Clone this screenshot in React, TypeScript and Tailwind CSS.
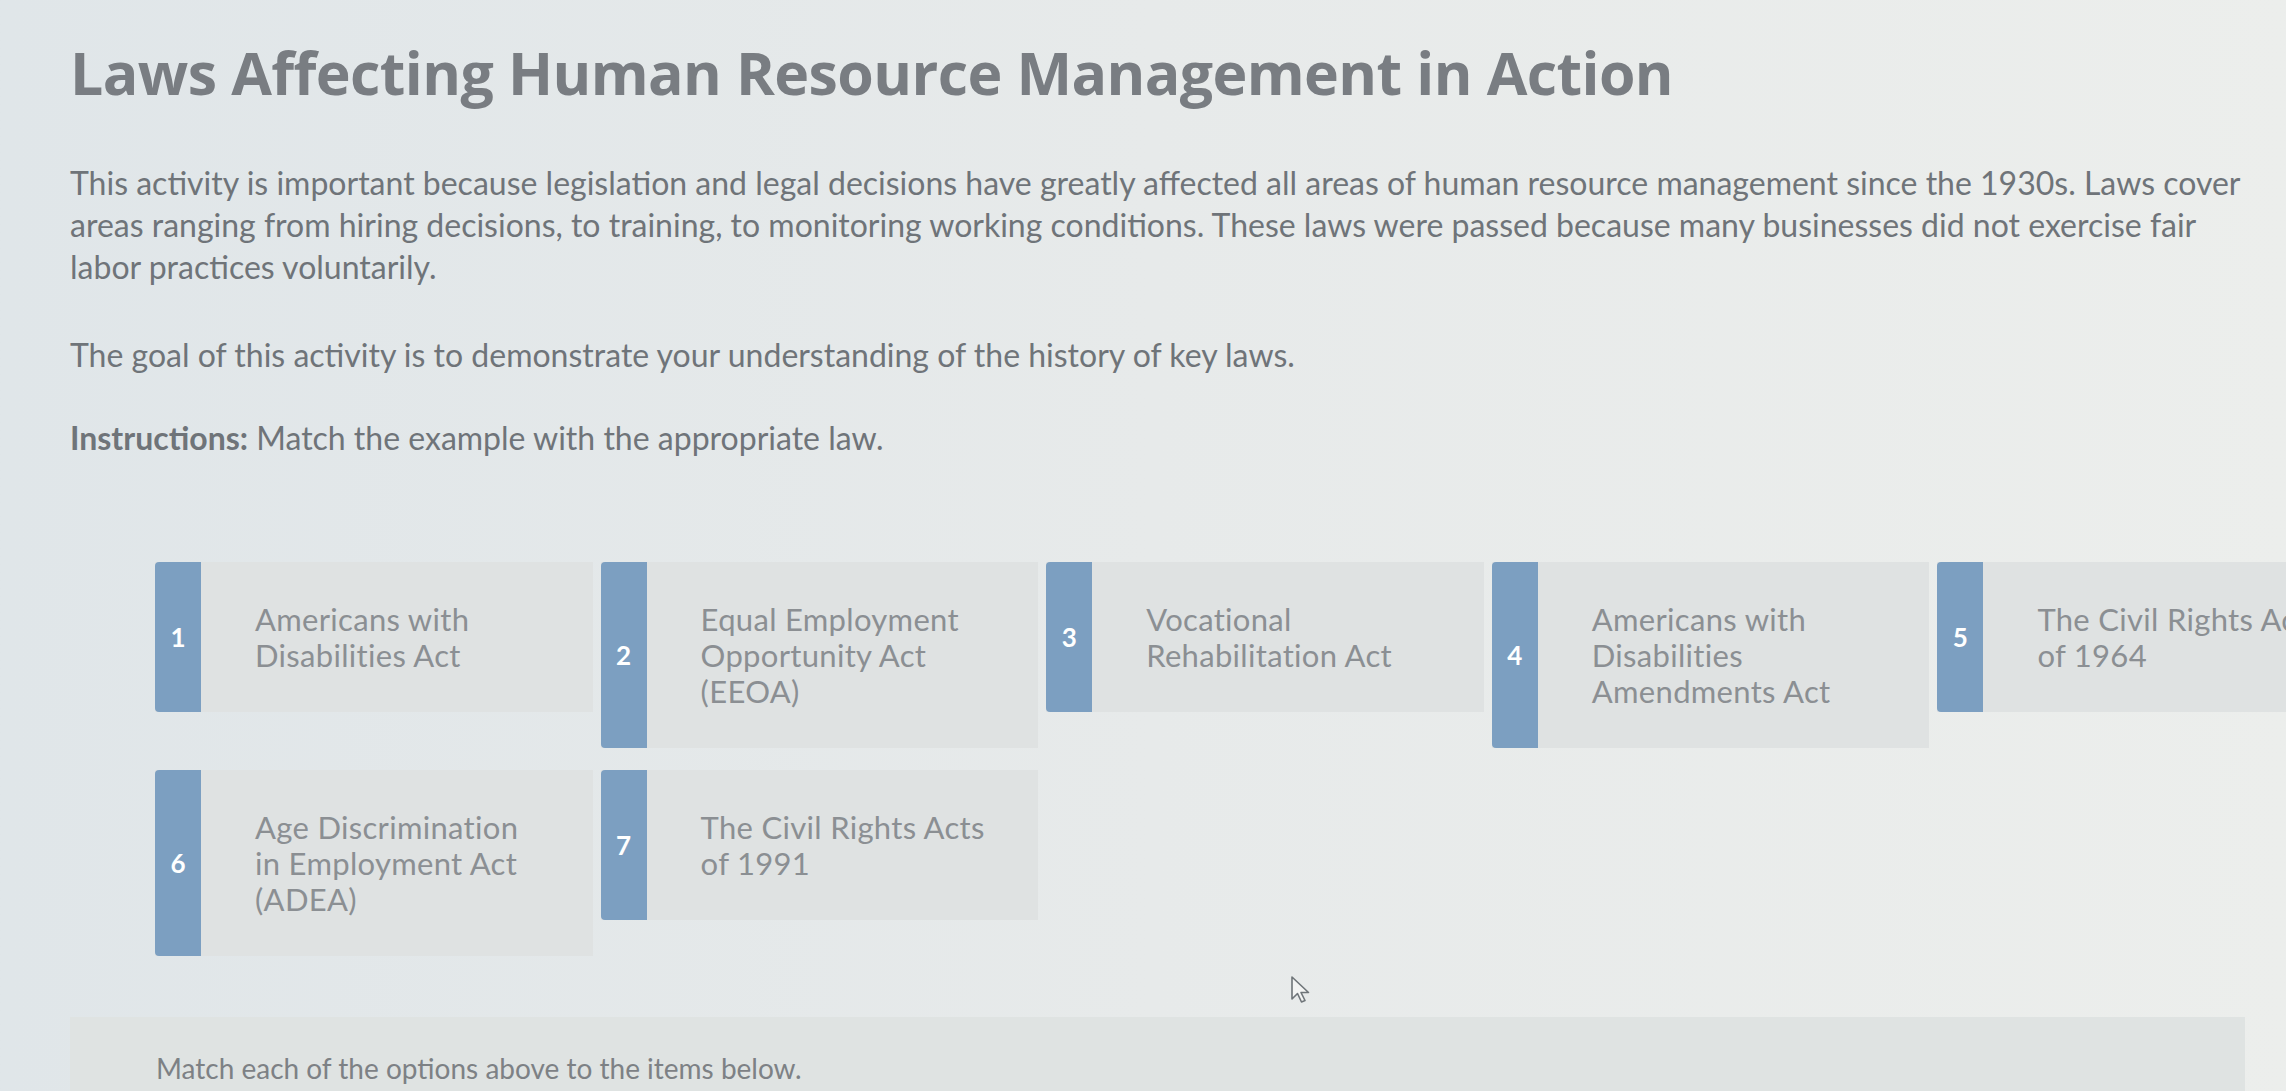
import React from "react";

type Law = { id: number; name: string };

const laws: Law[] = [
  { id: 1, name: "Americans with Disabilities Act" },
  { id: 2, name: "Equal Employment Opportunity Act (EEOA)" },
  { id: 3, name: "Vocational Rehabilitation Act" },
  { id: 4, name: "Americans with Disabilities Amendments Act" },
  { id: 5, name: "The Civil Rights Act of 1964" },
  { id: 6, name: "Age Discrimination in Employment Act (ADEA)" },
  { id: 7, name: "The Civil Rights Acts of 1991" },
];

const LawCard = ({ law }: { law: Law }) => (
  <div className="flex bg-[#dfe2e2]">
    <div className="w-[46px] shrink-0 rounded-l-[4px] bg-[#7c9fc1] flex items-center justify-center text-white text-[26px] font-bold">
      {law.id}
    </div>
    <div className="pl-[54px] py-[39px]">
      <p className="w-[289px] text-[31px] leading-[36px] tracking-[0.01em] text-[#8b8f93]">
        {law.name}
      </p>
    </div>
  </div>
);

// outlined system pointer
const Pointer = () => (
  <svg
    width="22"
    height="30"
    viewBox="0 0 22 30"
    className="absolute left-[1290px] top-[975px]"
  >
    <path
      d="M2 2 L2 24 L7.5 18.5 L11.5 27 L15 25.5 L11 17.5 L18.5 17.5 Z"
      fill="#f3f4f3"
      stroke="#6f7579"
      strokeWidth="1.6"
      strokeLinejoin="round"
    />
  </svg>
);

export default function App() {
  return (
    <div
      className="relative w-[2286px] h-[1091px] overflow-hidden bg-linear-to-r from-[#e0e6e9] via-[#e7eaea] to-[#eceeec] text-[#6f7479]"
      style={{ fontFamily: "Lato, 'Open Sans', sans-serif" }}
    >
      <div className="pl-[70px] pt-[37px]">
        <h1
          className="text-[59px] leading-[70px] font-bold tracking-[-0.01em] text-[#797d82]"
          style={{ fontFamily: "'Open Sans', Lato, sans-serif" }}
        >
          Laws Affecting Human Resource Management in Action
        </h1>

        <p className="mt-[55px] w-[2200px] text-[32px] leading-[42px]">
          This activity is important because legislation and legal decisions
          have greatly affected all areas of human resource management since
          the 1930s. Laws cover areas ranging from hiring decisions, to
          training, to monitoring working conditions. These laws were passed
          because many businesses did not exercise fair labor practices
          voluntarily.
        </p>

        <p className="mt-[46px] text-[32px] leading-[42px]">
          The goal of this activity is to demonstrate your understanding of the
          history of key laws.
        </p>

        <p className="mt-[41px] text-[32px] leading-[42px]">
          <span className="font-bold">Instructions:</span> Match the example
          with the appropriate law.
        </p>
      </div>

      <div className="ml-[155px] mt-[103px] w-[2220px] grid grid-cols-5 items-start gap-x-[8px] gap-y-[22px]">
        {laws.map((law) => (
          <LawCard key={law.id} law={law} />
        ))}
      </div>

      <div className="ml-[70px] mr-[41px] mt-[61px] h-[120px] bg-[#dfe3e2] pl-[86px] pt-[33px]">
        <p className="text-[28px] leading-[36px] text-[#7d8185]">
          Match each of the options above to the items below.
        </p>
      </div>

      <Pointer />
    </div>
  );
}
